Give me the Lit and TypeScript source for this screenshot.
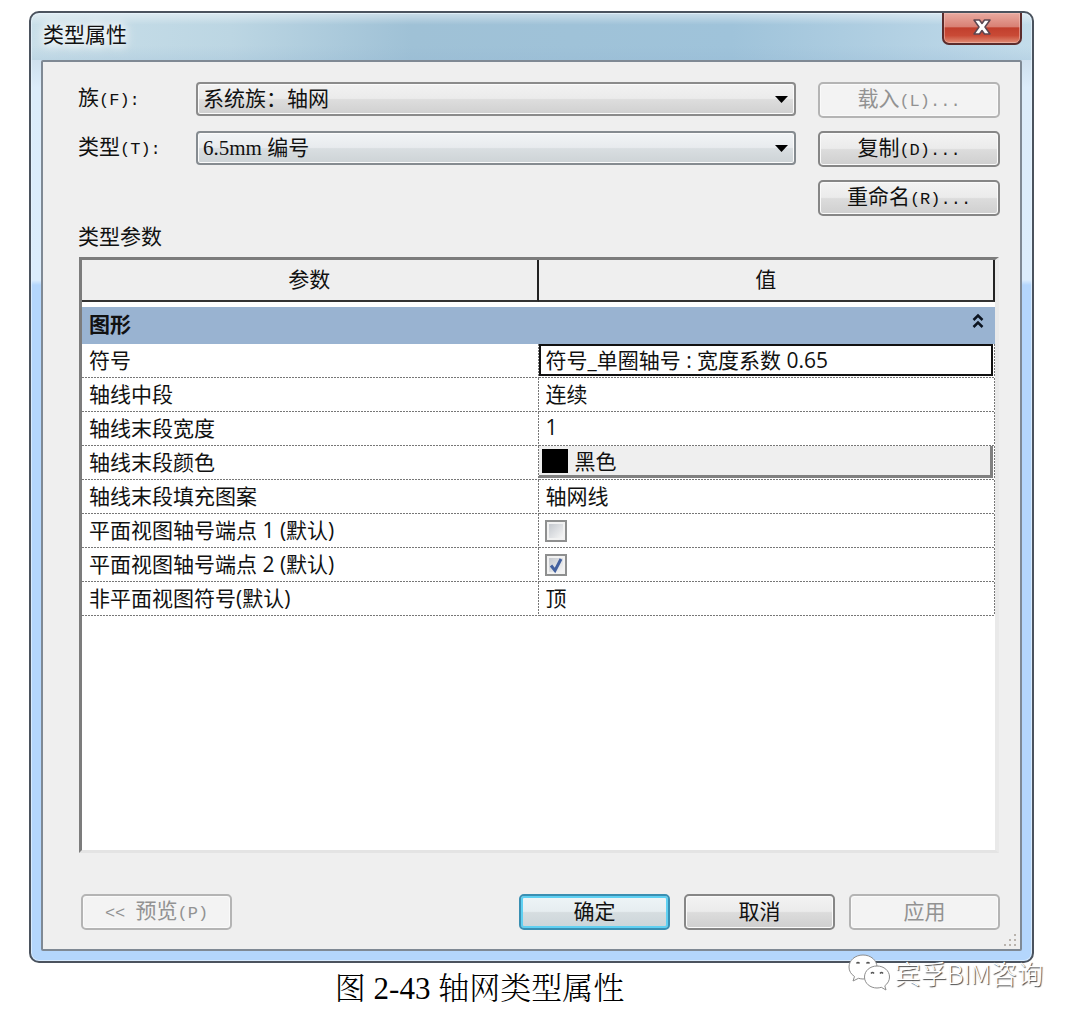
import { LitElement, html, css, svg, nothing } from "lit";
import { customElement, state } from "lit/decorators.js";
import { classMap } from "lit/directives/class-map.js";

type Row = { id: string; name: string; kind: "text" | "color" | "check"; value: string; active?: boolean };

const ROWS: Row[] = [
  { id: "symbol", name: "符号", kind: "text", value: "符号_单圈轴号 : 宽度系数 0.65", active: true },
  { id: "middle", name: "轴线中段", kind: "text", value: "连续" },
  { id: "weight", name: "轴线末段宽度", kind: "text", value: "1" },
  { id: "color", name: "轴线末段颜色", kind: "color", value: "黑色" },
  { id: "pattern", name: "轴线末段填充图案", kind: "text", value: "轴网线" },
  { id: "end1", name: "平面视图轴号端点 1 (默认)", kind: "check", value: "" },
  { id: "end2", name: "平面视图轴号端点 2 (默认)", kind: "check", value: "on" },
  { id: "nonplan", name: "非平面视图符号(默认)", kind: "text", value: "顶" },
];

const GRIP_DOTS = [[10, 0], [5, 5], [10, 5], [0, 10], [5, 10], [10, 10]];

@customElement("app-root")
export class AppRoot extends LitElement {
  @state() private collapsed = false;

  static styles = css`
    :host {
      display: flex;
      flex-direction: column;
      box-sizing: border-box;
      min-height: 100vh;
      padding: 11px 46px 0 29px;
      background: #fff;
      color: #111;
      font-family: "Liberation Sans", "Noto Sans CJK SC", sans-serif;
      font-size: 21px;
      line-height: 32px;
    }
    * { box-sizing: border-box; }
    button, input, select { font: inherit; color: inherit; margin: 0; }

    .dialog {
      position: relative;
      flex: 1;
      display: flex;
      flex-direction: column;
      padding: 0 10px 10px;
      border: 2px solid #4b535e;
      border-radius: 10px;
      background:
        linear-gradient(180deg, #ffffff77, #ffffff00 25%, #ffffff00 70%, #8fb2d033) 0 0 / 100% 47px no-repeat,
        linear-gradient(90deg, #c9dfe9, #bcd6e3 20%, #9fc1d6 38%, #9fc3da 70%, #b9d5e6 92%, #c3dcea) 0 0 / 100% 47px no-repeat,
        linear-gradient(180deg, #cfe0ee 47px, #dcecfa 75px, #dcedfc 267px, #b4d6fc 272px);
      box-shadow: inset 0 0 0 1px #eaf6ffaa;
    }
    .titlebar {
      display: flex;
      justify-content: space-between;
      align-items: flex-start;
      height: 47px;
    }
    .title {
      margin: 0;
      padding: 6px 0 0 2px;
      font: inherit;
      text-shadow: 0 0 8px #fff, 0 0 12px #fff, 0 0 16px #fff;
    }
    .close {
      display: grid;
      place-items: center;
      width: 80px;
      height: 32px;
      padding: 0 0 3px;
      border: 2px solid #5b2c2c;
      border-top: 0;
      border-radius: 0 0 7px 7px;
      background: linear-gradient(#e9aaa0, #d98175 45%, #c13f2d 50%, #c94a36 75%, #e08d76);
      box-shadow: inset 0 0 0 1px #f3c5bd88;
    }

    .body {
      position: relative;
      flex: 1;
      display: flex;
      flex-direction: column;
      padding: 20px 20px 19px 35px;
      border: 2px solid #7f8994;
      border-radius: 2px;
      background: #efefef;
    }
    .form {
      display: grid;
      grid-template-columns: 118px minmax(0, 1fr) 182px;
      grid-auto-rows: 36px;
      row-gap: 13px;
      align-items: start;
    }
    .half { font-family: "Liberation Mono", monospace; font-size: 17px; }
    .picker {
      display: grid;
      align-items: center;
      margin-right: 22px;
    }
    .picker > * { grid-area: 1 / 1; }
    .select {
      appearance: none;
      width: 100%;
      height: 34px;
      padding: 0 30px 0 5px;
      border: 2px solid #8b8b8b;
      border-radius: 4px;
      background: linear-gradient(#f2f2f2, #ebebeb 48%, #dddddd 52%, #d0d0d0);
      box-shadow: inset 0 0 0 1px #fbfbfb;
      font-family: "Liberation Serif", "Noto Sans CJK SC", serif;
      line-height: 28px;
    }
    .select.cool {
      border-color: #858b90;
      background: linear-gradient(#f1f4f6, #e8ebee 48%, #d9dee1 52%, #cdd3d6);
    }
    .arrow {
      justify-self: end;
      margin-right: 8px;
      pointer-events: none;
    }
    .btn {
      height: 36px;
      padding: 0;
      border: 2px solid #868686;
      border-radius: 5px;
      background: linear-gradient(#f3f3f3, #ebebeb 48%, #dcdcdc 52%, #cfcfcf);
      box-shadow: inset 0 0 0 1px #fafafa;
      line-height: 30px;
      white-space: pre;
    }
    .btn:disabled { color: #929292; border-color: #b4b4b4; background: #f3f3f3; }
    .btn.default {
      border-color: #3a8fb2;
      background: linear-gradient(#eef5f7, #e6edf0 48%, #d6dde0 52%, #cbd5d9);
      box-shadow: inset 0 0 0 2px #5fd0f2;
    }
    .col3 { grid-column: 3; }
    .caption {
      margin: 0;
      padding-top: 5px;
      height: 41px;
      font: inherit;
    }

    .frame {
      flex: 1;
      margin: 0 1px;
      border: 3px solid #7c7c7c;
      border-right: 4px solid #e9e9e9;
      border-bottom-color: #e4e4e4;
      background: #fff;
    }
    .table {
      width: 100%;
      border-collapse: separate;
      border-spacing: 0;
      table-layout: fixed;
      font-family: "Open Sans", "Noto Sans CJK SC", sans-serif;
      font-size: 21px;
      line-height: 30px;
    }
    .namecol { width: calc(50% - 1px); }
    th { font-weight: 400; text-align: left; }
    .head {
      height: 42px;
      padding: 0 0 2px;
      border-right: 2px solid #222;
      border-bottom: 2px solid #333;
      background: #efefef;
      text-align: center;
    }
    .group {
      height: 42px;
      padding: 0 9px 4px 7px;
      border-top: 5px solid #fff;
      background: #99b3d1;
      background-clip: padding-box;
      font-weight: 700;
    }
    .groupline { display: flex; justify-content: space-between; align-items: center; }
    .toggle {
      display: grid;
      padding: 0 2px 5px;
      border: 0;
      background: none;
    }
    .cell {
      height: 34px;
      padding: 0 2px 2px 7px;
      background:
        repeating-linear-gradient(90deg, #777 0 2px, #fff 2px 3px) 0 100% / 100% 1px no-repeat,
        repeating-linear-gradient(180deg, #777 0 2px, #fff 2px 3px) 100% 0 / 1px 100% no-repeat;
    }
    .value { padding: 0 2px 2px 0; }
    .field {
      display: block;
      width: 100%;
      height: 32px;
      padding: 0 0 2px 5px;
      border: 2px solid transparent;
      background: none;
      outline: 0;
      line-height: 26px;
    }
    .field.active { border-color: #111; background: #fff; }
    .swatchbtn {
      display: flex;
      align-items: center;
      gap: 7px;
      width: 100%;
      height: 32px;
      padding: 0 3px;
      border: 0 solid #808080;
      border-width: 0 3px 3px 0;
      background: #efefef;
      line-height: 28px;
    }
    .swatch { width: 26px; height: 24px; background: #000; }
    .tick { display: grid; width: 22px; margin: 2px 0 0 6px; }
    .tick > * { grid-area: 1 / 1; }
    .box {
      appearance: none;
      width: 22px;
      height: 22px;
      border: 2px solid #8e8f8f;
      background: linear-gradient(135deg, #c4c8ce, #f6f6f6) content-box, #f2f2f2;
      padding: 2px;
    }
    .mark { display: none; pointer-events: none; }
    .box:checked + .mark { display: block; }

    .footer { display: flex; gap: 14px; margin-top: 41px; padding-left: 3px; }
    .footer .btn { width: 151px; }
    .spacer { flex: 1; }
    .grip { position: absolute; right: 3px; bottom: 2px; }

    .figure {
      margin: 0;
      height: 59px;
      padding: 8px 104px 0 0;
      text-align: center;
      font-family: "Liberation Serif", "Noto Serif CJK SC", "Noto Sans CJK SC", serif;
      font-size: 31px;
      font-weight: 300;
      line-height: 36px;
      color: #000;
    }
    .mark-brand {
      position: absolute;
      right: -11px;
      bottom: -32px;
      display: flex;
      align-items: center;
      gap: 5px;
      color: #fff;
      font-family: "Noto Sans CJK SC", sans-serif;
      font-size: 26px;
      font-weight: 300;
      line-height: 40px;
      white-space: nowrap;
      text-shadow: 1px 1px 1px #444;
    }
  `;

  private arrow() {
    return html`<svg class="arrow" width="13" height="8" viewBox="0 0 13 8" aria-hidden="true"><path d="M0 1h13L6.500 8z" fill="#000" /></svg>`;
  }

  private value(r: Row) {
    if (r.kind === "color")
      return html`<button class="swatchbtn" type="button" aria-labelledby=${r.id}><span class="swatch"></span>${r.value}</button>`;
    if (r.kind === "check")
      return html`<span class="tick">
        <input class="box" type="checkbox" aria-labelledby=${r.id} ?checked=${r.value === "on"} />
        <svg class="mark" width="22" height="22" viewBox="0 0 22 22" aria-hidden="true">
          <path d="M6 11.500 L10 16.500 L16 5" fill="none" stroke="#43619f" stroke-width="3" />
        </svg>
      </span>`;
    return html`<input class=${classMap({ field: true, active: !!r.active })} type="text" aria-labelledby=${r.id} .value=${r.value} />`;
  }

  render() {
    return html`
      <section class="dialog" role="dialog" aria-labelledby="title">
        <header class="titlebar">
          <h1 class="title" id="title">类型属性</h1>
          <button class="close" type="button" aria-label="关闭">
            <svg width="20" height="18" viewBox="0 0 20 18" aria-hidden="true">
              <path d="M2 2h5.500l2.500 3.500 2.500-3.500h5.500l-5 7 5 7h-5.500l-2.500-3.500-2.500 3.500h-5.500l5-7z" fill="#fff" stroke="#5c4650" stroke-width="1.500" stroke-linejoin="round" />
            </svg>
          </button>
        </header>
        <div class="body">
          <div class="form">
            <label for="family">族<span class="half">(F):</span></label>
            <div class="picker">
              <select class="select" id="family"><option>系统族：轴网</option></select>
              ${this.arrow()}
            </div>
            <button class="btn" type="button" disabled>载入<span class="half">(L)...</span></button>
            <label for="type">类型<span class="half">(T):</span></label>
            <div class="picker">
              <select class="select cool" id="type"><option>6.5mm 编号</option></select>
              ${this.arrow()}
            </div>
            <button class="btn" type="button">复制<span class="half">(D)...</span></button>
            <button class="btn col3" type="button">重命名<span class="half">(R)...</span></button>
          </div>
          <h2 class="caption" id="params">类型参数</h2>
          <div class="frame">
            <table class="table" aria-labelledby="params">
              <colgroup><col class="namecol" /><col /></colgroup>
              <thead>
                <tr><th class="head" scope="col">参数</th><th class="head" scope="col">值</th></tr>
              </thead>
              <tbody>
                <tr>
                  <th class="group" colspan="2" scope="colgroup">
                    <div class="groupline">
                      图形
                      <button class="toggle" type="button" aria-label="折叠" @click=${() => (this.collapsed = !this.collapsed)}>
                        <svg width="12" height="16" viewBox="0 0 12 16" aria-hidden="true">
                          <path d="M1.500 7 L6 2.500 L10.500 7 M1.500 14 L6 9.500 L10.500 14" fill="none" stroke="#0c1420" stroke-width="2.500" />
                        </svg>
                      </button>
                    </div>
                  </th>
                </tr>
                ${this.collapsed ? nothing : ROWS.map((r) => html`<tr>
                  <th class="cell" scope="row" id=${r.id}>${r.name}</th>
                  <td class="cell value">${this.value(r)}</td>
                </tr>`)}
              </tbody>
            </table>
          </div>
          <footer class="footer">
            <button class="btn" type="button" disabled><span class="half">&lt;&lt; </span>预览<span class="half">(P)</span></button>
            <span class="spacer"></span>
            <button class="btn default" type="button">确定</button>
            <button class="btn" type="button">取消</button>
            <button class="btn" type="button" disabled>应用</button>
          </footer>
          <svg class="grip" width="14" height="14" viewBox="0 0 14 14" aria-hidden="true">
            ${GRIP_DOTS.map(([x, y]) => svg`<rect x=${x + 1} y=${y + 1} width="2" height="2" fill="#b9b3ad" />`)}
          </svg>
        </div>
        <div class="mark-brand">
          <svg width="42" height="38" viewBox="0 0 42 38" aria-hidden="true">
            <g fill="#fff" stroke="#8d8d8d" stroke-width="1" stroke-linejoin="round">
              <path d="M15 1C7 1 1 6.500 1 13c0 4 2 7.200 5.500 9.500L5 27l5.500-2.700c1.500.4 3 .7 4.500.7 8 0 14-5.500 14-12S23 1 15 1z" />
              <path d="M29 12c-7 0-12.500 4.800-12.500 11S22 34 29 34c1.500 0 3-.3 4.300-.7L38 36l-1.200-4.200C39.800 29.500 41.500 26.500 41.500 23c0-6.200-5.500-11-12.500-11z" />
            </g>
            <path d="M8.500 9.500q1.500-2 3 0M18.500 9.500q1.500-2 3 0M23 19.500q1.500-2 3 0M32 19.500q1.500-2 3 0" fill="none" stroke="#555" stroke-width="1.500" />
          </svg>
          <span>宾孚BIM咨询</span>
        </div>
      </section>
      <p class="figure">图 2-43 轴网类型属性</p>
    `;
  }
}
